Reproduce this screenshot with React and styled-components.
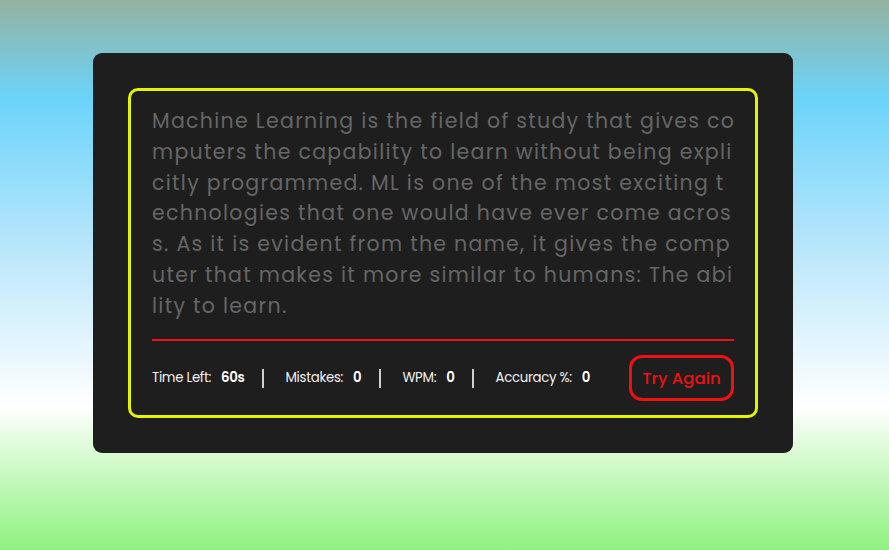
import React from 'react';
import styled, { createGlobalStyle } from 'styled-components';

const GlobalStyle = createGlobalStyle`
  * {
    box-sizing: border-box;
  }

  html,
  body {
    margin: 0;
    padding: 0;
    height: 100%;
  }

  body {
    font-family: 'Poppins', 'Open Sans', 'Noto Sans', sans-serif;
    background: linear-gradient(
      180deg,
      #94b29f 0%,
      #6bd4fa 18%,
      #b9e6fb 45%,
      #ffffff 74%,
      #c9f9c1 86%,
      #8ff27f 100%
    );
  }
`;

const paragraph = [
  'Machine Learning is the field of study that gives co',
  'mputers the capability to learn without being expli',
  'citly programmed. ML is one of the most exciting t',
  'echnologies that one would have ever come acros',
  's. As it is evident from the name, it gives the comp',
  'uter that makes it more similar to humans: The abi',
  'lity to learn.',
];

const stats = [
  { label: 'Time Left:', value: '60s' },
  { label: 'Mistakes:', value: '0' },
  { label: 'WPM:', value: '0' },
  { label: 'Accuracy %:', value: '0' },
];

const Page = styled.main`
  min-height: 100vh;
  display: flex;
  justify-content: center;
  align-items: flex-start;
  padding: 53px 3px 0 0;
`;

const Card = styled.section`
  width: 700px;
  height: 400px;
  padding: 35px;
  background: #1e1e1e;
  border-radius: 9px;
`;

const TypingBox = styled.div`
  height: 330px;
  display: flex;
  flex-direction: column;
  padding: 15px 21px 0;
  border: 3px solid #e5f400;
  border-radius: 10px;
`;

const Paragraph = styled.div`
  color: #666666;
  font-size: 20.5px;
  line-height: 30.8px;
  letter-spacing: 1.3px;
`;

const Line = styled.span`
  display: block;
  white-space: nowrap;
`;

const Divider = styled.hr`
  margin: 17px 0 0;
  border: 0;
  height: 2.5px;
  background: #ee1111;
`;

const Footer = styled.div`
  flex: 1;
  display: flex;
  align-items: center;
  justify-content: space-between;
`;

const StatList = styled.div`
  display: flex;
  align-items: center;
`;

const Stat = styled.p`
  margin: 0;
  display: flex;
  align-items: center;
  gap: 10px;
  height: 19px;
  padding: 0 18px 0 21px;
  border-right: 2px solid #cfcfcf;
  font-size: 13.3px;
  letter-spacing: -0.3px;
  color: #f2f2f2;

  &:first-child {
    padding-left: 0;
  }

  &:last-child {
    border-right: 0;
  }
`;

const Value = styled.span`
  font-weight: 600;
  color: #ffffff;
`;

const RetryButton = styled.button`
  width: 105px;
  height: 46px;
  padding: 0;
  background: transparent;
  border: 3px solid #ee1111;
  border-radius: 13px;
  color: #ee1111;
  font-family: inherit;
  font-size: 16.5px;
  font-weight: 500;
  cursor: pointer;
`;

const App = () => (
  <>
    <GlobalStyle />
    <Page>
      <Card>
        <TypingBox>
          <Paragraph>
            {paragraph.map((line) => (
              <Line key={line}>{line}</Line>
            ))}
          </Paragraph>
          <Divider />
          <Footer>
            <StatList>
              {stats.map(({ label, value }) => (
                <Stat key={label}>
                  {label}
                  <Value>{value}</Value>
                </Stat>
              ))}
            </StatList>
            <RetryButton>Try Again</RetryButton>
          </Footer>
        </TypingBox>
      </Card>
    </Page>
  </>
);

export default App;
